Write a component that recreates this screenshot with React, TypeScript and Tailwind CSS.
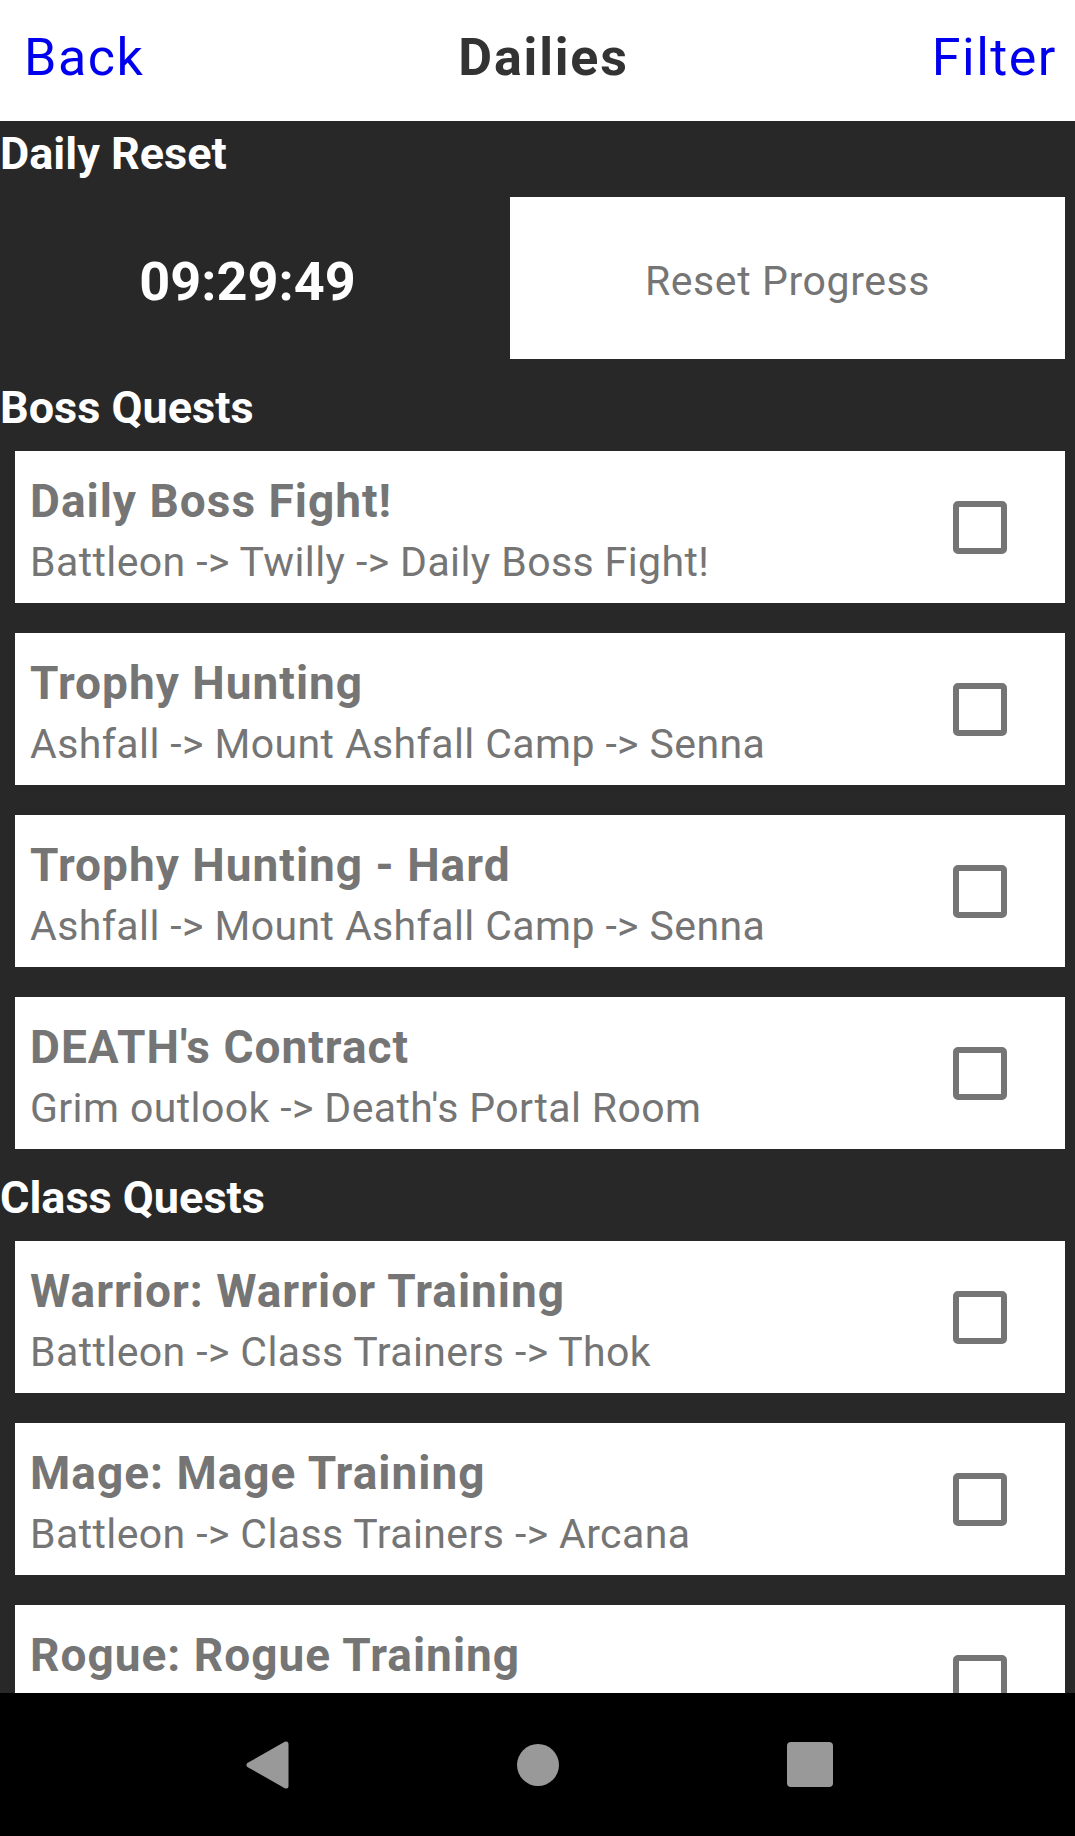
import React from 'react';

type Quest = { title: string; path: string };

const bossQuests: Quest[] = [
  { title: 'Daily Boss Fight!', path: 'Battleon -> Twilly -> Daily Boss Fight!' },
  { title: 'Trophy Hunting', path: 'Ashfall -> Mount Ashfall Camp -> Senna' },
  { title: 'Trophy Hunting - Hard', path: 'Ashfall -> Mount Ashfall Camp -> Senna' },
  { title: "DEATH's Contract", path: "Grim outlook -> Death's Portal Room" },
];

const classQuests: Quest[] = [
  { title: 'Warrior: Warrior Training', path: 'Battleon -> Class Trainers -> Thok' },
  { title: 'Mage: Mage Training', path: 'Battleon -> Class Trainers -> Arcana' },
  { title: 'Rogue: Rogue Training', path: 'Battleon -> Class Trainers -> Shade' },
];

function SectionTitle({ children, first }: { children: React.ReactNode; first?: boolean }) {
  return (
    <h2
      className={`${first ? 'pt-[6px]' : 'pt-[22px]'} pb-[17px] text-[45px] leading-[53px] font-bold text-white`}
    >
      {children}
    </h2>
  );
}

function QuestCard({ quest }: { quest: Quest }) {
  return (
    <div className="flex h-[152px] shrink-0 items-center bg-white pl-[15px] pr-[58px]">
      <div className="flex flex-1 flex-col self-start pt-[23px] text-[#757575]">
        <span className="text-[46px] leading-[54px] font-bold tracking-[1px]">{quest.title}</span>
        <span className="mt-[10px] text-[41px] leading-[48px] tracking-[0.4px]">{quest.path}</span>
      </div>
      <div className="h-[53px] w-[54px] rounded-[5px] border-[6px] border-[#757575]" />
    </div>
  );
}

export default function App() {
  return (
    <div className="flex h-[1836px] w-[1075px] flex-col overflow-hidden bg-[#282828] font-['Roboto',sans-serif]">
      {/* Top bar */}
      <header className="grid h-[121px] shrink-0 grid-cols-[1fr_auto_1fr] items-start bg-white pl-[24px] pr-[18px] pt-[27px] text-[52px] leading-[61px] tracking-[1.5px]">
        <button className="justify-self-start text-[#0000ee]">Back</button>
        <h1 className="ml-[6px] font-bold tracking-[1.8px] text-[#333333]">Dailies</h1>
        <button className="justify-self-end text-[#0000ee]">Filter</button>
      </header>

      {/* Scrolling content */}
      <main className="h-[1572px] shrink-0 overflow-hidden">
        <SectionTitle first>Daily Reset</SectionTitle>
        <div className="flex h-[162px] items-center pr-[10px]">
          <div className="w-[495px] pt-[7px] text-center text-[54px] leading-[63px] font-bold text-white">
            09:29:49
          </div>
          <button className="ml-[15px] flex h-full flex-1 items-center justify-center bg-white pt-[5px] text-[41px] leading-[48px] tracking-[0.6px] text-[#757575]">
            Reset Progress
          </button>
        </div>

        <SectionTitle>Boss Quests</SectionTitle>
        <div className="flex flex-col gap-[30px] pl-[15px] pr-[10px]">
          {bossQuests.map(q => (
            <QuestCard key={q.title} quest={q} />
          ))}
        </div>

        <SectionTitle>Class Quests</SectionTitle>
        <div className="flex flex-col gap-[30px] pl-[15px] pr-[10px]">
          {classQuests.map(q => (
            <QuestCard key={q.title} quest={q} />
          ))}
        </div>
      </main>

      {/* Android nav bar */}
      <nav className="flex h-[143px] shrink-0 items-center justify-center bg-black">
        <div className="grid w-[810px] grid-cols-3 items-center justify-items-center">
          <svg width="43" height="48" viewBox="0 0 43 48">
            <polygon
              points="40,3 40,45 3,24"
              fill="#999999"
              stroke="#999999"
              strokeWidth="5"
              strokeLinejoin="round"
            />
          </svg>
          <div className="h-[42px] w-[42px] rounded-full bg-[#999999]" />
          <div className="ml-[4px] h-[45px] w-[46px] rounded-[4px] bg-[#999999]" />
        </div>
      </nav>
    </div>
  );
}
